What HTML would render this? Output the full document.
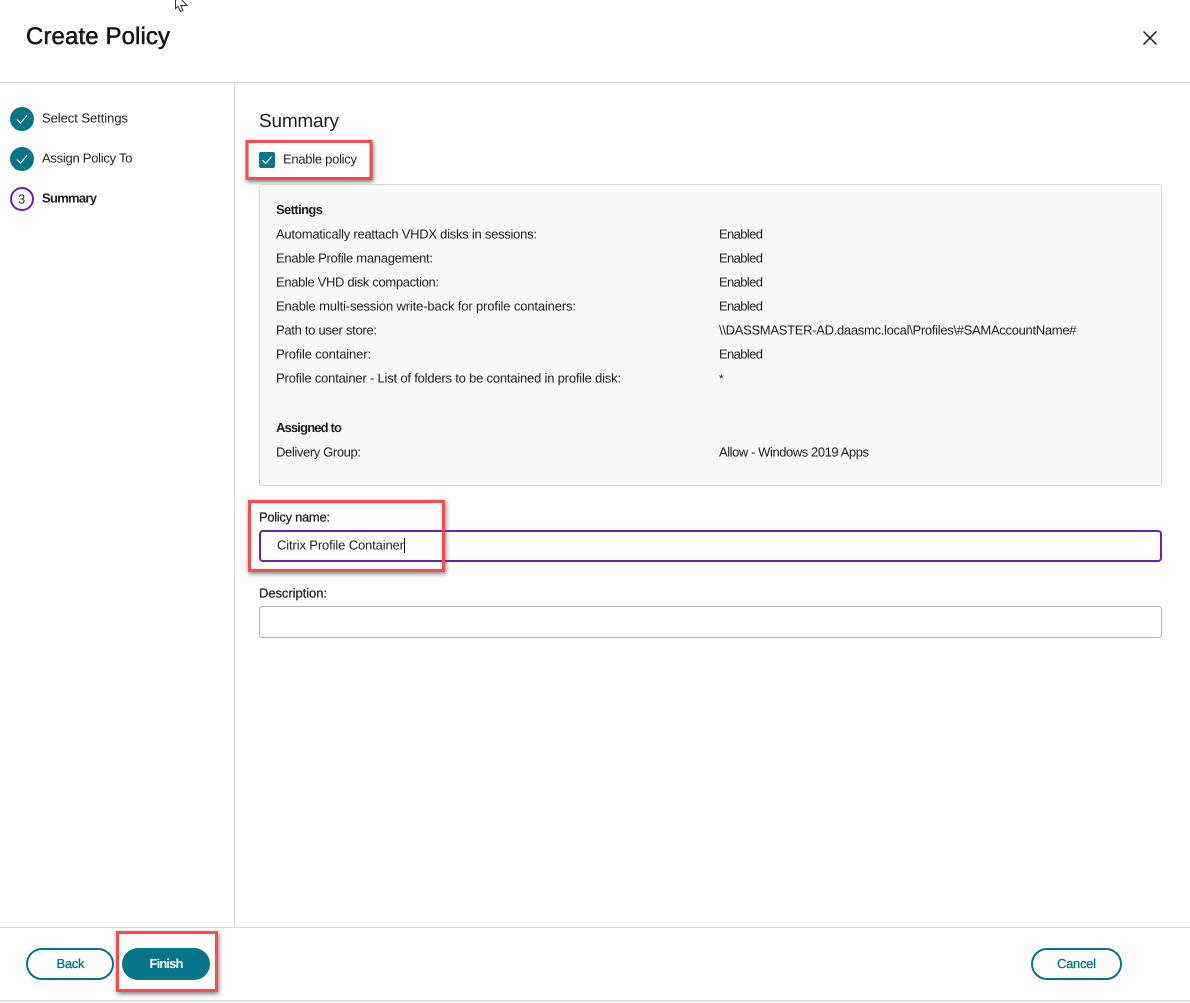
<!DOCTYPE html>
<html lang="en">
<head>
<meta charset="utf-8">
<title>Create Policy</title>
<style>
html,body{margin:0;padding:0;background:#fff;width:1190px;height:1003px;overflow:hidden}
svg{display:block}
text{font-family:"Liberation Sans",sans-serif;font-size:13px;fill:#1f1f1f}
.b{font-weight:700}
</style>
</head>
<body>
<svg width="1190" height="1003" viewBox="0 0 1190 1003" xmlns="http://www.w3.org/2000/svg" text-rendering="geometricPrecision">
<defs>
<filter id="s" x="-20%" y="-30%" width="140%" height="160%"><feDropShadow dx="1" dy="2" stdDeviation="2.500" flood-color="#000" flood-opacity="0.5"/></filter>
</defs>

<!-- cursor -->
<path d="M175.500 -1 L175.500 8.500 L178 6.300 L180.500 11.500 L183 10.300 L180.800 5.500 L187 5.500 L181 -1" fill="#fff" stroke="#333" stroke-width="1"/>

<!-- header -->
<text x="26" y="44" textLength="144" lengthAdjust="spacing" style="font-size:24px;fill:#141414;stroke:#141414;stroke-width:.5">Create Policy</text>
<path d="M1143.500 31.500 L1156.500 44.500 M1156.500 31.500 L1143.500 44.500" stroke="#1a1a1a" stroke-width="1.500" fill="none"/>

<!-- dividers -->
<rect x="0" y="82" width="1190" height="1" fill="#d9d9d9"/>
<rect x="234" y="83" width="1" height="844" fill="#d9d9d9"/>
<rect x="0" y="927" width="1190" height="1" fill="#dcdcdc"/>
<rect x="0" y="1000" width="1190" height="1" fill="#dcdcdc"/>
<rect x="0" y="1001" width="1190" height="2" fill="#f3f3f3"/>

<!-- steps -->
<circle cx="22" cy="119" r="12" fill="#05758a"/>
<path d="M17 119.500 L20.500 123 L27 115.500" stroke="#fff" stroke-width="1" fill="none"/>
<text x="42" y="122.500" textLength="86" lengthAdjust="spacing">Select Settings</text>
<circle cx="22" cy="159" r="12" fill="#05758a"/>
<path d="M17 159.500 L20.500 163 L27 155.500" stroke="#fff" stroke-width="1" fill="none"/>
<text x="42" y="162.500" textLength="90.500" lengthAdjust="spacing">Assign Policy To</text>
<circle cx="22" cy="199" r="11" fill="#fff" stroke="#6b1fb5" stroke-width="2"/>
<text x="18" y="203.500" textLength="8" lengthAdjust="spacing" style="font-size:13px;fill:#333">3</text>
<text class="b" x="42" y="202.500" textLength="55" lengthAdjust="spacing">Summary</text>

<!-- summary heading -->
<text x="259" y="127" textLength="80" lengthAdjust="spacing" style="font-size:19px;fill:#1f1f1f">Summary</text>

<!-- enable policy -->
<rect x="247" y="141.500" width="124" height="37" fill="#fff" stroke="#fb4a4c" stroke-width="3" filter="url(#s)"/>
<rect x="259" y="152" width="16" height="16" rx="2" fill="#05758a"/>
<path d="M262.500 160 L265.700 163.500 L271.500 156.500" stroke="#fff" stroke-width="1" fill="none"/>
<text x="283" y="163.500" textLength="74" lengthAdjust="spacing">Enable policy</text>

<!-- panel -->
<rect x="259.500" y="184.500" width="902" height="301" rx="2" fill="#f8f8f8" stroke="#d8d8d8"/>
<text class="b" x="276" y="214" textLength="47" lengthAdjust="spacing">Settings</text>
<text x="276" y="238.500" textLength="261" lengthAdjust="spacing">Automatically reattach VHDX disks in sessions:</text>
<text x="276" y="262.500" textLength="157" lengthAdjust="spacing">Enable Profile management:</text>
<text x="276" y="286.500" textLength="163" lengthAdjust="spacing">Enable VHD disk compaction:</text>
<text x="276" y="310.500" textLength="300" lengthAdjust="spacing">Enable multi-session write-back for profile containers:</text>
<text x="276" y="334.500" textLength="101" lengthAdjust="spacing">Path to user store:</text>
<text x="276" y="358.500" textLength="95" lengthAdjust="spacing">Profile container:</text>
<text x="276" y="382.500" textLength="345" lengthAdjust="spacing">Profile container - List of folders to be contained in profile disk:</text>
<text class="b" x="276" y="432" textLength="66" lengthAdjust="spacing">Assigned to</text>
<text x="276" y="456.500" textLength="85" lengthAdjust="spacing">Delivery Group:</text>

<text x="719" y="238.500" textLength="44" lengthAdjust="spacing">Enabled</text>
<text x="719" y="262.500" textLength="44" lengthAdjust="spacing">Enabled</text>
<text x="719" y="286.500" textLength="44" lengthAdjust="spacing">Enabled</text>
<text x="719" y="310.500" textLength="44" lengthAdjust="spacing">Enabled</text>
<text x="719" y="334.500" textLength="357.500" lengthAdjust="spacing">\\DASSMASTER-AD.daasmc.local\Profiles\#SAMAccountName#</text>
<text x="719" y="358.500" textLength="44" lengthAdjust="spacing">Enabled</text>
<text x="719" y="382.500" style="font-size:12px">*</text>
<text x="719" y="456.500" textLength="150" lengthAdjust="spacing">Allow - Windows 2019 Apps</text>

<!-- policy name highlight -->
<rect x="249.500" y="501.500" width="194" height="69" fill="#fff" stroke="#fb4a4c" stroke-width="3" filter="url(#s)"/>
<text x="259" y="521.500" textLength="71" lengthAdjust="spacing" style="stroke:#1f1f1f;stroke-width:.25">Policy name:</text>

<!-- policy name input -->
<rect x="260" y="531" width="901" height="30" rx="3" fill="none" stroke="#6b1fb5" stroke-width="2"/>
<rect x="249.500" y="501.500" width="194" height="69" fill="none" stroke="#fb4a4c" stroke-width="3"/>
<text x="277" y="549.500" textLength="127" lengthAdjust="spacing">Citrix Profile Container</text>
<rect x="404" y="538" width="1" height="15" fill="#111"/>

<!-- description -->
<text x="259" y="597.500" textLength="68" lengthAdjust="spacing" style="stroke:#1f1f1f;stroke-width:.25">Description:</text>
<rect x="259.500" y="606.500" width="902" height="31" rx="3" fill="#fff" stroke="#b0b0b0"/>

<!-- footer -->
<rect x="27" y="949" width="86" height="30" rx="15" fill="#fff" stroke="#05758a" stroke-width="2"/>
<text x="56.500" y="968" textLength="28" lengthAdjust="spacing" style="fill:#05758a;stroke:#05758a;stroke-width:.3">Back</text>

<rect x="117.500" y="932.500" width="99" height="58" fill="#fff" stroke="#fb4a4c" stroke-width="3" filter="url(#s)"/>
<rect x="122" y="948" width="88" height="32" rx="16" fill="#05758a"/>
<text class="b" x="149.500" y="968" textLength="34" lengthAdjust="spacing" style="fill:#fff">Finish</text>

<rect x="1032" y="949" width="89" height="30" rx="15" fill="#fff" stroke="#05758a" stroke-width="2"/>
<text x="1057" y="968" textLength="39" lengthAdjust="spacing" style="fill:#05758a;stroke:#05758a;stroke-width:.3">Cancel</text>
</svg>
</body>
</html>
